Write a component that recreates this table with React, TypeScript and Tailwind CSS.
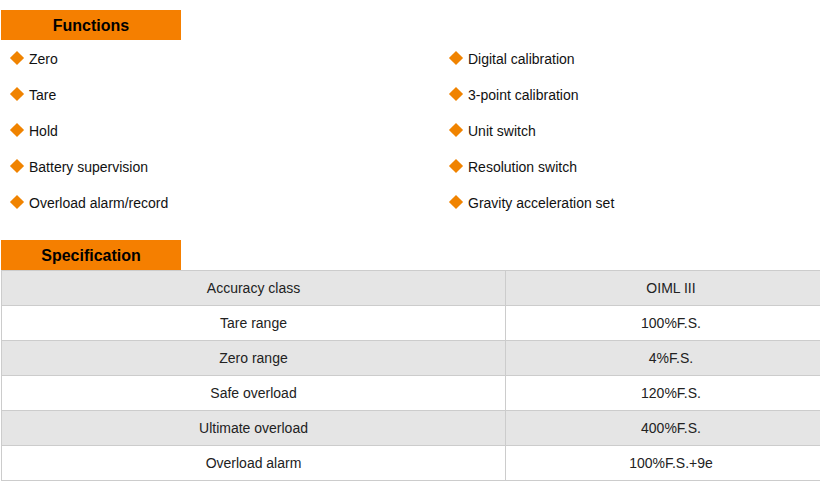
import React from "react";

const left = ["Zero", "Tare", "Hold", "Battery supervision", "Overload alarm/record"];
const right = ["Digital calibration", "3-point calibration", "Unit switch", "Resolution switch", "Gravity acceleration set"];
const spec: [string, string][] = [
  ["Accuracy class", "OIML III"],
  ["Tare range", "100%F.S."],
  ["Zero range", "4%F.S."],
  ["Safe overload", "120%F.S."],
  ["Ultimate overload", "400%F.S."],
  ["Overload alarm", "100%F.S.+9e"],
];

function Item({ text }: { text: string }) {
  return (
    <div className="h-[36px] flex items-center">
      <div className="w-[21px] flex -mt-[3px]">
        <div className="ml-[4px] w-[10px] h-[10px] rotate-45 bg-[#f08300]" />
      </div>
      <span className="text-[14px] text-[#111]">{text}</span>
    </div>
  );
}

function Header({ title }: { title: string }) {
  return (
    <div className="ml-[1px] w-[180px] h-[30px] pt-[1px] bg-[#f57f00] flex items-center justify-center text-[16px] font-bold text-black">
      {title}
    </div>
  );
}

export default function App() {
  return (
    <div className="w-[820px] h-[481px] bg-white overflow-hidden pt-[10px]" style={{ fontFamily: '"Liberation Sans", Arial, sans-serif' }}>
      <Header title="Functions" />
      <div className="grid grid-cols-[439px_1fr] pl-[8px] pt-[1px]">
        <div className="flex flex-col">
          {left.map((t) => (
            <Item key={t} text={t} />
          ))}
        </div>
        <div className="flex flex-col">
          {right.map((t) => (
            <Item key={t} text={t} />
          ))}
        </div>
      </div>
      <div className="h-[19px]" />
      <Header title="Specification" />
      <table className="ml-[1px] w-[836px] border-collapse text-[14px] text-[#222]">
        <tbody>
          {spec.map(([a, b], i) => (
            <tr key={a} className={i % 2 === 0 ? "bg-[#e5e5e5]" : "bg-white"}>
              <td className="w-[504px] h-[35px] border border-[#cccccc] text-center p-0">{a}</td>
              <td className="h-[35px] border border-[#cccccc] text-center p-0">{b}</td>
            </tr>
          ))}
        </tbody>
      </table>
    </div>
  );
}
